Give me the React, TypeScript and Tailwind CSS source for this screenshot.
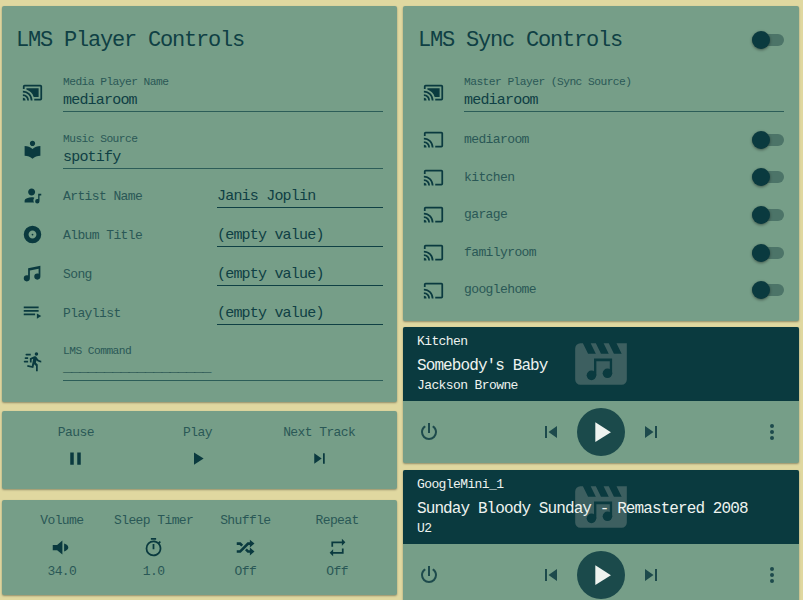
const CAST = "M1,10V12A9,9 0 0,1 10,21H12C12,14.92 7.07,10 1,10M1,14V16A5,5 0 0,1 6,21H8A7,7 0 0,0 1,14M1,18V21H4A3,3 0 0,0 1,18M21,3H3C1.89,3 1,3.89 1,5V8H3V5H21V19H14V21H21A2,2 0 0,0 23,19V5C23,3.89 22.1,3 21,3Z";
const CAST_CONNECTED = "M21,3H3C1.89,3 1,3.89 1,5V8H3V5H21V19H14V21H21A2,2 0 0,0 23,19V5C23,3.89 22.1,3 21,3M1,10V12A9,9 0 0,1 10,21H12C12,14.92 7.08,10 1,10M19,7H5V8.63C8.96,9.91 12.09,13.04 13.37,17H19M1,14V16A5,5 0 0,1 6,21H8A7,7 0 0,0 1,14M1,18V21H4A3,3 0 0,0 1,18Z";
const LIBRARY = "M12 11.55C9.64 9.35 6.48 8 3 8v11c3.48 0 6.64 1.35 9 3.55 2.36-2.19 5.52-3.55 9-3.55V8c-3.48 0-6.64 1.35-9 3.55zM12 8c1.66 0 3-1.34 3-3s-1.34-3-3-3-3 1.34-3 3 1.34 3 3 3z";
const ACCOUNT_MUSIC = "M11,14C12,14 13.05,14.16 14.2,14.44C13.39,15.31 13,16.33 13,17.5C13,18.39 13.25,19.23 13.78,20H3V18C3,16.81 3.91,15.85 5.74,15.12C7.57,14.38 9.33,14 11,14M11,12C9.92,12 9,11.61 8.18,10.83C7.38,10.05 7,9.11 7,8C7,6.92 7.38,6 8.18,5.18C9,4.38 9.92,4 11,4C12.11,4 13.05,4.38 13.83,5.18C14.61,6 15,6.92 15,8C15,9.11 14.61,10.05 13.83,10.83C13.05,11.61 12.11,12 11,12M18.5,10H22V12H20V18.5A2.5,2.5 0 0,1 17.5,21A2.5,2.5 0 0,1 15,18.5A2.5,2.5 0 0,1 17.5,16C17.86,16 18.19,16.07 18.5,16.21V10Z";
const ALBUM = "M12,11A1,1 0 0,0 11,12A1,1 0 0,0 12,13A1,1 0 0,0 13,12A1,1 0 0,0 12,11M12,16.5C9.5,16.5 7.5,14.5 7.5,12C7.5,9.5 9.5,7.5 12,7.5C14.5,7.5 16.5,9.5 16.5,12C16.5,14.5 14.5,16.5 12,16.5M12,2A10,10 0 0,0 2,12A10,10 0 0,0 12,22A10,10 0 0,0 22,12A10,10 0 0,0 12,2Z";
const MUSIC = "M21,3V15.5A3.5,3.5 0 0,1 17.5,19A3.5,3.5 0 0,1 14,15.5A3.5,3.5 0 0,1 17.5,12C18.04,12 18.55,12.12 19,12.34V6.47L9,8.6V17.5A3.5,3.5 0 0,1 5.5,21A3.5,3.5 0 0,1 2,17.5A3.5,3.5 0 0,1 5.5,14C6.04,14 6.55,14.12 7,14.34V6L21,3Z";
const PLAYLIST = "M19,9H2V11H19V9M19,5H2V7H19V5M2,15H15V13H2V15M17,13V19L22,16L17,13Z";
const RUN_FAST = "M16.5,5.5A2,2 0 0,0 18.5,3.5A2,2 0 0,0 16.5,1.5A2,2 0 0,0 14.5,3.5A2,2 0 0,0 16.5,5.5M12.9,19.4L13.9,15L16,17V23H18V15.5L15.9,13.5L16.5,10.5C17.89,12.09 19.89,13 22,13V11C20.24,11.03 18.6,10.11 17.7,8.6L16.7,7C16.34,6.4 15.7,6 15,6C14.7,6 14.5,6.1 14.2,6.1L9,8.3V13H11V9.6L12.8,8.9L11.2,17L6.3,16L5.9,18L12.9,19.4M4,9A1,1 0 0,1 3,8A1,1 0 0,1 4,7H7V9H4M5,5A1,1 0 0,1 4,4A1,1 0 0,1 5,3H10V5H5M3,13A1,1 0 0,1 2,12A1,1 0 0,1 3,11H7V13H3Z";
const PAUSE = "M14,19H18V5H14M6,19H10V5H6V19Z";
const PLAY = "M8,5.14V19.14L19,12.14L8,5.14Z";
const SKIP_NEXT = "M16,18H18V6H16M6,18L14.5,12L6,6V18Z";
const SKIP_PREV = "M6,18V6H8V18H6M9.5,12L18,6V18L9.5,12Z";
const VOLUME = "M2,9V15H7L13,20V4L7,9M15,7.5C17.8,8.3 19.8,10 19.8,12C19.8,14 17.8,15.7 15,16.5V7.5Z";
const TIMER = "M12,20A7,7 0 0,1 5,13A7,7 0 0,1 12,6A7,7 0 0,1 19,13A7,7 0 0,1 12,20M19.03,7.39L20.45,5.97C20,5.46 19.55,5 19.04,4.56L17.62,6C16.07,4.74 14.12,4 12,4A9,9 0 0,0 3,13A9,9 0 0,0 12,22C17,22 21,17.97 21,13C21,10.88 20.26,8.93 19.03,7.39M11,14H13V8H11M15,1H9V3H15V1Z";
const SHUFFLE = "M17,3L22.25,7.5L17,12L22.25,16.5L17,21V18H14.26L11.44,15.18L13.56,13.06L15.5,15H17V12L17,9H15.5L6.5,18H2V15H5.26L14.26,6H17V3M2,6H6.5L9.32,8.82L7.2,10.94L5.26,9H2V6Z";
const REPEAT = "M17,17H7V14L3,18L7,22V19H19V13H17M7,7H17V10L21,6L17,2V5H5V11H7V7Z";
const POWER = "M16.56,5.44L15.11,6.89C16.84,7.94 18,9.83 18,12A6,6 0 0,1 12,18A6,6 0 0,1 6,12C6,9.83 7.16,7.94 8.88,6.88L7.44,5.44C5.36,6.88 4,9.28 4,12A8,8 0 0,0 12,20A8,8 0 0,0 20,12C20,9.28 18.64,6.88 16.56,5.44M13,3H11V13H13";
const DOTS = "M12,16A2,2 0 0,1 14,18A2,2 0 0,1 12,20A2,2 0 0,1 10,18A2,2 0 0,1 12,16M12,10A2,2 0 0,1 14,12A2,2 0 0,1 12,14A2,2 0 0,1 10,12A2,2 0 0,1 12,10M12,4A2,2 0 0,1 14,6A2,2 0 0,1 12,8A2,2 0 0,1 10,6A2,2 0 0,1 12,4Z";
const MOVIE = "M18,4L20,8H17L15,4H13L15,8H12L10,4H8L10,8H7L5,4H4A2,2 0 0,0 2,6V18A2,2 0 0,0 4,20H20A2,2 0 0,0 22,18V4H18Z";

const CARD = "rounded-[2px] bg-[#769e88] shadow-[0_1px_2px_rgba(0,0,0,0.35)]";
const LABEL = "text-[13px] tracking-[-0.6px] text-[#2a5856]";
const VALUE = "text-[15px] tracking-[-0.8px] text-[#0f4044]";
const TITLE = "text-[22px] tracking-[-1.2px] leading-[26px] text-[#0f4044]";

function Icon({ d, className = "w-[21px] h-[21px] text-[#0a3a3f]" }: { d: string; className?: string }) {
  return (
    <svg viewBox="0 0 24 24" className={`shrink-0 fill-current ${className}`}>
      <path d={d} />
    </svg>
  );
}

function Toggle() {
  return (
    <div className="relative w-[32px] h-[12px] rounded-full bg-[#4c7468]">
      <div className="absolute left-0 top-[-3px] w-[18px] h-[18px] rounded-full bg-[#0a3a3f] shadow-[0_1px_3px_rgba(0,0,0,0.45)]" />
    </div>
  );
}

function FieldRow({ icon, label, value, h = "h-[57px]", valueClass = "" }: { icon: string; label: string; value: string; h?: string; valueClass?: string }) {
  return (
    <div className={`flex items-end ${h}`}>
      <div className="flex w-[61px] h-[40px] shrink-0 items-center pl-[20px]">
        <Icon d={icon} />
      </div>
      <div className="flex-1 h-[44px] border-b border-[#2c5d58] pt-[8px]">
        <div className="text-[11.25px] tracking-[-0.55px] leading-[13px] text-[#2a5856]">{label}</div>
        <div className={`mt-[3px] leading-[18px] ${VALUE} ${valueClass}`}>{value}</div>
      </div>
    </div>
  );
}

function SelectRow({ icon, label, value }: { icon: string; label: string; value: string }) {
  return (
    <div className="flex items-end h-[39px]">
      <div className="flex w-[61px] h-[26px] shrink-0 items-center pl-[20px]">
        <Icon d={icon} />
      </div>
      <div className={`w-[154px] h-[30px] flex items-center pt-[8px] ${LABEL}`}>{label}</div>
      <div className={`flex-1 h-[30px] flex items-center pt-[9px] border-b border-[#0f4044] ${VALUE}`}>{value}</div>
    </div>
  );
}

function SyncRow({ label }: { label: string }) {
  return (
    <div className="flex items-center h-[37.6px]">
      <div className="w-[61px] shrink-0 pl-[20px]">
        <Icon d={CAST} />
      </div>
      <div className={`flex-1 ${LABEL}`}>{label}</div>
      <Toggle />
    </div>
  );
}

function Action({ label, icon, value, gap = "mt-[8px]" }: { label: string; icon: string; value?: string; gap?: string }) {
  return (
    <div className="flex flex-1 flex-col items-center">
      <div className={`leading-[16px] whitespace-nowrap ${LABEL}`}>{label}</div>
      <Icon d={icon} className={`${gap} w-[21px] h-[21px] text-[#0a3a3f]`} />
      {value && <div className={`mt-[6px] leading-[16px] ${LABEL}`}>{value}</div>}
    </div>
  );
}

function MediaCard({ player, title, artist }: { player: string; title: string; artist: string }) {
  return (
    <div className={CARD}>
      <div className="relative h-[74px] bg-[#0a3a3f] pl-[14px] pt-[7px] text-[#eef3ef] rounded-t-[2px]">
        {/* faded clapper art sits behind the text */}
        <svg viewBox="0 0 24 24" className="absolute left-[167px] top-[6px] w-[62px] h-[62px]">
          <path d={MOVIE} fill="#3d5f60" />
          <path d="M9.3,9.9H16.3V15.6H15.4V10.9H10.2V16.4H9.3Z" fill="#0a3a3f" />
          <circle cx="8.3" cy="16.4" r="1.85" fill="#0a3a3f" />
          <circle cx="14.5" cy="15.6" r="1.85" fill="#0a3a3f" />
        </svg>
        <div className="relative text-[13px] tracking-[-0.6px] leading-[16px]">{player}</div>
        <div className="relative mt-[6px] text-[16px] tracking-[-0.9px] leading-[20px]">{title}</div>
        <div className="relative mt-[2px] text-[13px] tracking-[-0.6px] leading-[16px]">{artist}</div>
      </div>
      <div className="flex items-center h-[62px] pl-[14px] pr-[15px]">
        <Icon d={POWER} className="w-[24px] h-[24px] text-[#1d4a4c]" />
        <div className="flex flex-1 items-center justify-center gap-[14px]">
          <Icon d={SKIP_PREV} className="w-[24px] h-[24px] text-[#1d4a4c]" />
          <div className="flex w-[48px] h-[48px] items-center justify-center rounded-full bg-[#1b4a4b]">
            <Icon d={PLAY} className="w-[34px] h-[34px] text-[#eef3ef]" />
          </div>
          <Icon d={SKIP_NEXT} className="w-[24px] h-[24px] text-[#1d4a4c]" />
        </div>
        <Icon d={DOTS} className="w-[24px] h-[24px] text-[#1d4a4c]" />
      </div>
    </div>
  );
}

export default function App() {
  return (
    <div className="h-[600px] overflow-hidden bg-[#e0d8a0] pl-[2px] pr-[4px] pt-[6px] font-['Liberation_Mono',monospace]">
      <div className="flex gap-[6px]">
        <div className="w-[395px]">
          <div className={`${CARD} h-[396px] pr-[14px]`}>
            <div className={`h-[49px] pl-[14px] pt-[22px] ${TITLE}`}>LMS Player Controls</div>
            <FieldRow icon={CAST_CONNECTED} label="Media Player Name" value="mediaroom" />
            <FieldRow icon={LIBRARY} label="Music Source" value="spotify" />
            <SelectRow icon={ACCOUNT_MUSIC} label="Artist Name" value="Janis Joplin" />
            <SelectRow icon={ALBUM} label="Album Title" value="(empty value)" />
            <SelectRow icon={MUSIC} label="Song" value="(empty value)" />
            <SelectRow icon={PLAYLIST} label="Playlist" value="(empty value)" />
            <FieldRow icon={RUN_FAST} label="LMS Command" value="__________________" h="h-[56px]" valueClass="font-bold -translate-y-[2px]" />
          </div>
          <div className={`${CARD} mt-[9px] h-[78px] flex pl-[13px] pr-[17px] pt-[14px]`}>
            <Action label="Pause" icon={PAUSE} gap="mt-[7px]" />
            <Action label="Play" icon={PLAY} gap="mt-[7px]" />
            <Action label="Next Track" icon={SKIP_NEXT} gap="mt-[7px]" />
          </div>
          <div className={`${CARD} mt-[11px] h-[95px] flex px-[14px] pt-[13px]`}>
            <Action label="Volume" icon={VOLUME} value="34.0" />
            <Action label="Sleep Timer" icon={TIMER} value="1.0" />
            <Action label="Shuffle" icon={SHUFFLE} value="Off" />
            <Action label="Repeat" icon={REPEAT} value="Off" />
          </div>
        </div>
        <div className="w-[396px]">
          <div className={`${CARD} h-[315px] pr-[15px]`}>
            <div className="flex h-[49px] items-start justify-between pl-[15px] pt-[22px]">
              <div className={TITLE}>LMS Sync Controls</div>
              <div className="pt-[6px]"><Toggle /></div>
            </div>
            <FieldRow icon={CAST_CONNECTED} label="Master Player (Sync Source)" value="mediaroom" />
            <div className="pt-[9px]">
              {["mediaroom", "kitchen", "garage", "familyroom", "googlehome"].map((name) => (
                <SyncRow key={name} label={name} />
              ))}
            </div>
          </div>
          <div className="mt-[6px]">
            <MediaCard player="Kitchen" title="Somebody's Baby" artist="Jackson Browne" />
          </div>
          <div className="mt-[7px]">
            <MediaCard player="GoogleMini_1" title="Sunday Bloody Sunday - Remastered 2008" artist="U2" />
          </div>
        </div>
      </div>
    </div>
  );
}
